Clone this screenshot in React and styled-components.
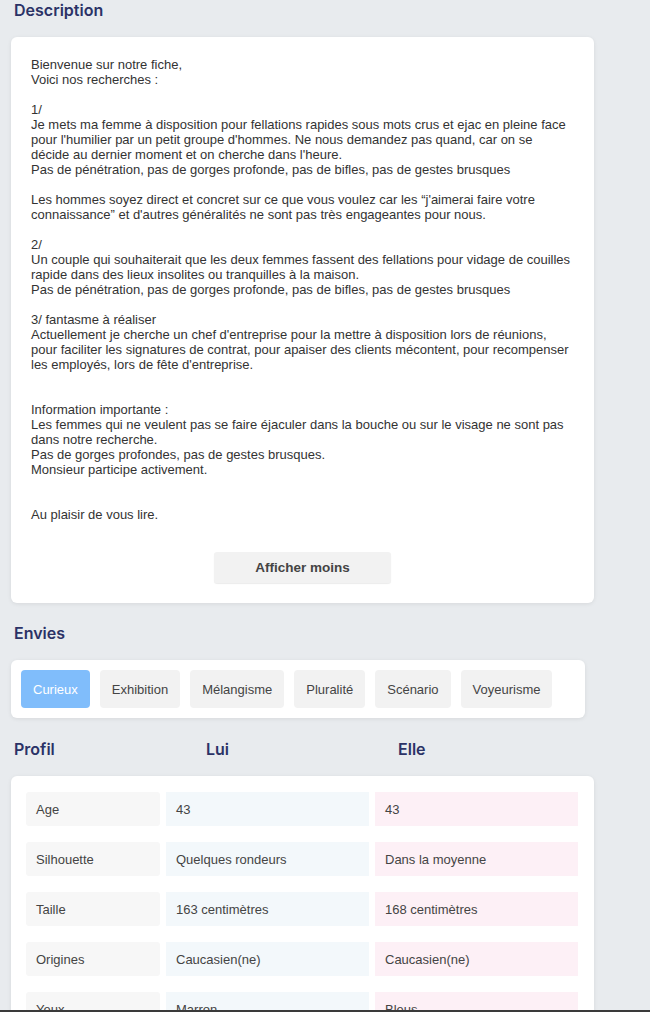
import React from 'react';
import styled, { createGlobalStyle } from 'styled-components';

const GlobalStyle = createGlobalStyle`
  body {
    margin: 0;
    background: #e8ebee;
    font-family: "Liberation Sans", Arial, sans-serif;
  }
`;

const description = `Bienvenue sur notre fiche,
Voici nos recherches :

1/
Je mets ma femme à disposition pour fellations rapides sous mots crus et ejac en pleine face pour l'humilier par un petit groupe d'hommes. Ne nous demandez pas quand, car on se décide au dernier moment et on cherche dans l'heure.
Pas de pénétration, pas de gorges profonde, pas de bifles, pas de gestes brusques

Les hommes soyez direct et concret sur ce que vous voulez car les “j'aimerai faire votre connaissance” et d'autres généralités ne sont pas très engageantes pour nous.

2/
Un couple qui souhaiterait que les deux femmes fassent des fellations pour vidage de couilles rapide dans des lieux insolites ou tranquilles à la maison.
Pas de pénétration, pas de gorges profonde, pas de bifles, pas de gestes brusques

3/ fantasme à réaliser
Actuellement je cherche un chef d'entreprise pour la mettre à disposition lors de réunions, pour faciliter les signatures de contrat, pour apaiser des clients mécontent, pour recompenser les employés, lors de fête d'entreprise.


Information importante :
Les femmes qui ne veulent pas se faire éjaculer dans la bouche ou sur le visage ne sont pas dans notre recherche.
Pas de gorges profondes, pas de gestes brusques.
Monsieur participe activement.


Au plaisir de vous lire.`;

const envies = ['Curieux', 'Exhibition', 'Mélangisme', 'Pluralité', 'Scénario', 'Voyeurisme'];

const profil = [
  ['Age', '43', '43'],
  ['Silhouette', 'Quelques rondeurs', 'Dans la moyenne'],
  ['Taille', '163 centimètres', '168 centimètres'],
  ['Origines', 'Caucasien(ne)', 'Caucasien(ne)'],
  ['Yeux', 'Marron', 'Bleus'],
];

const App = () => {
  return (
    <Page>
      <GlobalStyle />
      <Column>
        <Heading>Description</Heading>
        <Card>
          <DescText>{description}</DescText>
          <ButtonRow>
            <LessButton>Afficher moins</LessButton>
          </ButtonRow>
        </Card>

        <EnviesSection>
          <Heading>Envies</Heading>
          <TagCard>
            {envies.map((e, i) => (
              <Tag key={e} active={i === 0}>{e}</Tag>
            ))}
          </TagCard>
        </EnviesSection>

        <ProfilHeader>
          <Heading>Profil</Heading>
          <Heading>Lui</Heading>
          <Heading>Elle</Heading>
        </ProfilHeader>
        <ProfilCard>
          {profil.map(([label, lui, elle]) => (
            <React.Fragment key={label}>
              <Cell kind="label">{label}</Cell>
              <Cell kind="lui">{lui}</Cell>
              <Cell kind="elle">{elle}</Cell>
            </React.Fragment>
          ))}
        </ProfilCard>
      </Column>
      <BottomBar />
    </Page>
  );
};
export default App;

const Page = styled.div`
  width: 650px;
  height: 1012px;
  overflow: hidden;
  padding-left: 11px;
  box-sizing: border-box;
`;

const Column = styled.div`
  width: 583px;
  display: flex;
  flex-direction: column;
`;

const Heading = styled.div`
  font-family: Inter, "Noto Sans", sans-serif;
  font-weight: 600;
  font-size: 16px;
  color: #2b3266;
  padding-left: 3px;
  line-height: 20px;
`;

const Card = styled.div`
  margin-top: 17px;
  background: #fff;
  border-radius: 6px;
  box-shadow: 0 1px 4px rgba(0, 0, 0, 0.08);
  padding: 20px 20px 20px 20px;
`;

const DescText = styled.div`
  white-space: pre-line;
  font-size: 13px;
  line-height: 15px;
  color: #333;
`;

const ButtonRow = styled.div`
  display: flex;
  justify-content: center;
  margin-top: 30px;
`;

const LessButton = styled.div`
  width: 177px;
  height: 31px;
  display: flex;
  align-items: center;
  justify-content: center;
  background: #f2f2f2;
  border-radius: 3px;
  box-shadow: 0 1px 1px rgba(0, 0, 0, 0.08);
  font-weight: bold;
  font-size: 13.5px;
  color: #444;
`;

const EnviesSection = styled.div`
  width: 574px;
  margin-top: 20px;
  display: flex;
  flex-direction: column;
  gap: 17px;
`;

const TagCard = styled.div`
  background: #fff;
  border-radius: 6px;
  box-shadow: 0 1px 4px rgba(0, 0, 0, 0.08);
  padding: 10px;
  display: flex;
  gap: 10px;
`;

const Tag = styled.div`
  height: 38px;
  padding: 0 12px;
  display: flex;
  align-items: center;
  border-radius: 4px;
  font-size: 13px;
  background: ${p => (p.active ? '#80bdfb' : '#f2f2f2')};
  color: ${p => (p.active ? '#fff' : '#444')};
`;

const ProfilHeader = styled.div`
  margin-top: 21px;
  display: grid;
  grid-template-columns: 192px 192px 192px;
`;

const ProfilCard = styled.div`
  margin-top: 17px;
  background: #fff;
  border-radius: 6px 6px 0 0;
  box-shadow: 0 1px 4px rgba(0, 0, 0, 0.08);
  padding: 16px 16px 16px 15px;
  display: grid;
  grid-template-columns: 134px 1fr 1fr;
  column-gap: 6px;
  row-gap: 16px;
`;

const cellColors = {
  label: '#f7f7f7',
  lui: '#f3f8fb',
  elle: '#fdf0f6',
};

const Cell = styled.div`
  height: 34px;
  display: flex;
  align-items: center;
  padding-left: 10px;
  border-radius: ${p => (p.kind === 'label' ? '3px' : '0')};
  background: ${p => cellColors[p.kind]};
  font-size: 13px;
  color: #444;
`;

const BottomBar = styled.div`
  position: fixed;
  left: 0;
  right: 0;
  bottom: 0;
  height: 2px;
  background: #3a3a3a;
`;
